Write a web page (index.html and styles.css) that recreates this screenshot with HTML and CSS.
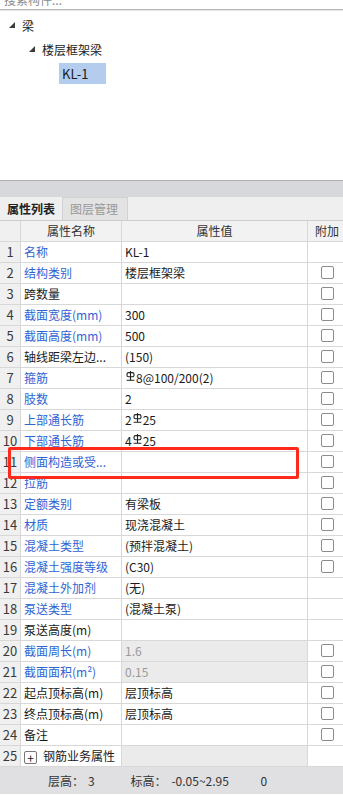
FILE: index.html
```html
<!DOCTYPE html>
<html lang="zh-CN">
<head>
  <meta charset="UTF-8">
  <meta name="viewport" content="width=device-width, initial-scale=1.0">
  <title>属性列表</title>
  <link rel="stylesheet" href="styles.css">
</head>
<body>
  <div class="search"><span>搜索构件...</span></div>

  <div class="tree">
    <div class="node lv1"><svg class="arrow" viewBox="0 0 6 6" width="6" height="6"><polygon points="6,0 6,6 0,6"/></svg><span>梁</span></div>
    <div class="node lv2"><svg class="arrow" viewBox="0 0 6 6" width="6" height="6"><polygon points="6,0 6,6 0,6"/></svg><span>楼层框架梁</span></div>
    <div class="node lv3"><span class="selected">KL-1</span></div>
  </div>

  <div class="split"></div>

  <div class="tabs">
    <div class="tab active">属性列表</div>
    <div class="tab">图层管理</div>
  </div>

  <div class="grid">
    <div class="row head">
      <div class="c-no"></div>
      <div class="c-name">属性名称</div>
      <div class="c-val">属性值</div>
      <div class="c-add">附加</div>
    </div>

    <div class="row"><div class="c-no">1</div><div class="c-name blue">名称</div><div class="c-val">KL-1</div><div class="c-add"></div></div>
    <div class="row"><div class="c-no">2</div><div class="c-name blue">结构类别</div><div class="c-val">楼层框架梁</div><div class="c-add"><i class="chk"></i></div></div>
    <div class="row"><div class="c-no">3</div><div class="c-name">跨数量</div><div class="c-val"></div><div class="c-add"><i class="chk"></i></div></div>
    <div class="row"><div class="c-no">4</div><div class="c-name blue">截面宽度(mm)</div><div class="c-val">300</div><div class="c-add"><i class="chk"></i></div></div>
    <div class="row"><div class="c-no">5</div><div class="c-name blue">截面高度(mm)</div><div class="c-val">500</div><div class="c-add"><i class="chk"></i></div></div>
    <div class="row"><div class="c-no">6</div><div class="c-name">轴线距梁左边...</div><div class="c-val">(150)</div><div class="c-add"><i class="chk"></i></div></div>
    <div class="row"><div class="c-no">7</div><div class="c-name blue">箍筋</div><div class="c-val"><svg class="hrb" viewBox="0 0 9 10" width="9" height="10"><path d="M4.5 0v9M0.6 9.2h7.8"/><rect x="1" y="1.6" width="7" height="4.2" rx="1.6"/></svg>8@100/200(2)</div><div class="c-add"><i class="chk"></i></div></div>
    <div class="row"><div class="c-no">8</div><div class="c-name blue">肢数</div><div class="c-val">2</div><div class="c-add"><i class="chk"></i></div></div>
    <div class="row"><div class="c-no">9</div><div class="c-name blue">上部通长筋</div><div class="c-val">2<svg class="hrb" viewBox="0 0 9 10" width="9" height="10"><path d="M4.5 0v9M0.6 9.2h7.8"/><rect x="1" y="1.6" width="7" height="4.2" rx="1.6"/></svg>25</div><div class="c-add"><i class="chk"></i></div></div>
    <div class="row"><div class="c-no">10</div><div class="c-name blue">下部通长筋</div><div class="c-val">4<svg class="hrb" viewBox="0 0 9 10" width="9" height="10"><path d="M4.5 0v9M0.6 9.2h7.8"/><rect x="1" y="1.6" width="7" height="4.2" rx="1.6"/></svg>25</div><div class="c-add"><i class="chk"></i></div></div>
    <div class="row marked"><div class="c-no">11</div><div class="c-name blue">侧面构造或受...</div><div class="c-val"></div><div class="c-add"><i class="chk"></i></div><div class="mark"></div></div>
    <div class="row"><div class="c-no">12</div><div class="c-name blue">拉筋</div><div class="c-val"></div><div class="c-add"><i class="chk"></i></div></div>
    <div class="row"><div class="c-no">13</div><div class="c-name blue">定额类别</div><div class="c-val">有梁板</div><div class="c-add"><i class="chk"></i></div></div>
    <div class="row"><div class="c-no">14</div><div class="c-name blue">材质</div><div class="c-val">现浇混凝土</div><div class="c-add"><i class="chk"></i></div></div>
    <div class="row"><div class="c-no">15</div><div class="c-name blue">混凝土类型</div><div class="c-val">(预拌混凝土)</div><div class="c-add"><i class="chk"></i></div></div>
    <div class="row"><div class="c-no">16</div><div class="c-name blue">混凝土强度等级</div><div class="c-val">(C30)</div><div class="c-add"><i class="chk"></i></div></div>
    <div class="row"><div class="c-no">17</div><div class="c-name blue">混凝土外加剂</div><div class="c-val">(无)</div><div class="c-add"></div></div>
    <div class="row"><div class="c-no">18</div><div class="c-name blue">泵送类型</div><div class="c-val">(混凝土泵)</div><div class="c-add"></div></div>
    <div class="row"><div class="c-no">19</div><div class="c-name">泵送高度(m)</div><div class="c-val"></div><div class="c-add"></div></div>
    <div class="row"><div class="c-no">20</div><div class="c-name blue">截面周长(m)</div><div class="c-val readonly">1.6</div><div class="c-add"><i class="chk"></i></div></div>
    <div class="row"><div class="c-no">21</div><div class="c-name blue">截面面积(m²)</div><div class="c-val readonly">0.15</div><div class="c-add"><i class="chk"></i></div></div>
    <div class="row"><div class="c-no">22</div><div class="c-name">起点顶标高(m)</div><div class="c-val">层顶标高</div><div class="c-add"><i class="chk"></i></div></div>
    <div class="row"><div class="c-no">23</div><div class="c-name">终点顶标高(m)</div><div class="c-val">层顶标高</div><div class="c-add"><i class="chk"></i></div></div>
    <div class="row"><div class="c-no">24</div><div class="c-name">备注</div><div class="c-val"></div><div class="c-add"><i class="chk"></i></div></div>
    <div class="row"><div class="c-no">25</div><div class="c-name"><span class="plus">+</span>钢筋业务属性</div><div class="c-val readonly"></div><div class="c-add"></div></div>
  </div>

  <div class="status">
    <span class="st-label">层高：</span><span class="st-num">3</span>
    <span class="st-label st-gap">标高：</span><span class="st-range">-0.05~2.95</span>
    <span class="st-last">0</span>
  </div>
</body>
</html>
```

FILE: styles.css
```css
body {
  margin: 0;
  width: 343px;
  height: 795px;
  overflow: hidden;
  background: #fff;
  color: #1a1a1a;
  font-family: "Noto Sans CJK SC", "Noto Sans", sans-serif;
  font-size: 12px;
}

.search {
  height: 9px;
  overflow: hidden;
  padding-left: 4px;
  color: #8a8a8a;
  border-bottom: 1px solid #b8b8b8;
}

.search span {
  display: block;
  line-height: 16px;
  margin-top: -8px;
}

.tree {
  height: 170px;
  padding-top: 2px;
  box-sizing: border-box;
  border-top: 1px solid #e4e4e4;
}

.node {
  height: 24px;
  display: flex;
  align-items: center;
}

.arrow {
  fill: #3c3c3c;
  margin-right: 7px;
}

.lv1 {
  padding-left: 9px;
}

.lv2 {
  padding-left: 29px;
}

.lv3 {
  padding-left: 59px;
}

.selected {
  display: block;
  width: 47px;
  height: 21px;
  line-height: 21px;
  padding-left: 3px;
  box-sizing: border-box;
  background: #b4cdee;
  font-size: 13px;
}

.split {
  height: 16px;
  border-top: 1px solid #b0b0b0;
  background: #d6d8dc;
}

.tabs {
  height: 23px;
  display: flex;
  align-items: flex-end;
  background: #efefef;
  border-bottom: 1px solid #cdcdcd;
}

.tab {
  height: 23px;
  line-height: 23px;
  padding: 0 7px;
  box-sizing: border-box;
  color: #999;
}

.tab.active {
  color: #222;
  font-weight: bold;
  padding-right: 7px;
}

.tab:not(.active) {
  background: #e3e3e3;
  border: 1px solid #d2d2d2;
  border-bottom: none;
  width: 66px;
  line-height: 22px;
}

.row {
  display: grid;
  grid-template-columns: 21px 101px 186px 35px;
  height: 21px;
  border-bottom: 1px solid #d8d8d8;
  box-sizing: border-box;
  position: relative;
}

.row > div {
  border-right: 1px solid #d8d8d8;
  line-height: 20px;
  white-space: nowrap;
  overflow: hidden;
}

.row > .c-add {
  border-right: none;
}

.c-no {
  background: #f0f0f0;
  text-align: center;
  color: #3a3a3a;
  font-size: 13px;
}

.c-name {
  padding-left: 3px;
}

.c-val {
  padding-left: 3px;
}

.blue {
  color: #2f64d4;
}

.readonly {
  background: #ebebeb;
  color: #9a9a9a;
}

.c-add {
  padding-left: 13px;
}

.chk {
  display: block;
  width: 13px;
  height: 13px;
  margin-top: 3px;
  box-sizing: border-box;
  border: 1px solid #8c8c8c;
  border-radius: 2px;
  background: #fff;
}

.head {
  background: #f2f2f2;
}

.head .c-name,
.head .c-val {
  text-align: center;
  padding-left: 0;
  color: #333;
}

.head .c-add {
  padding-left: 7px;
  color: #333;
}

.hrb {
  fill: none;
  stroke: #222;
  stroke-width: 1.1;
  vertical-align: 2px;
  margin: 0 1px;
}

.plus {
  display: inline-block;
  width: 13px;
  height: 13px;
  line-height: 11px;
  box-sizing: border-box;
  border: 1px solid #777;
  border-radius: 2px;
  text-align: center;
  font-size: 12px;
  vertical-align: -2px;
  margin-right: 6px;
}

.row > .mark {
  position: absolute;
  z-index: 2;
  left: 8px;
  top: -5px;
  width: 291px;
  height: 32px;
  box-sizing: border-box;
  border: 3px solid #ff2a1c;
  border-radius: 2px;
  overflow: visible;
}

.status {
  height: 27px;
  line-height: 27px;
  background: #e0e0e2;
  padding-left: 48px;
  color: #333;
  white-space: nowrap;
}

.status .st-num {
  margin-left: 4px;
}

.status .st-gap {
  margin-left: 33px;
}

.status .st-range {
  margin-left: 5px;
}

.status .st-last {
  margin-left: 29px;
}
```
